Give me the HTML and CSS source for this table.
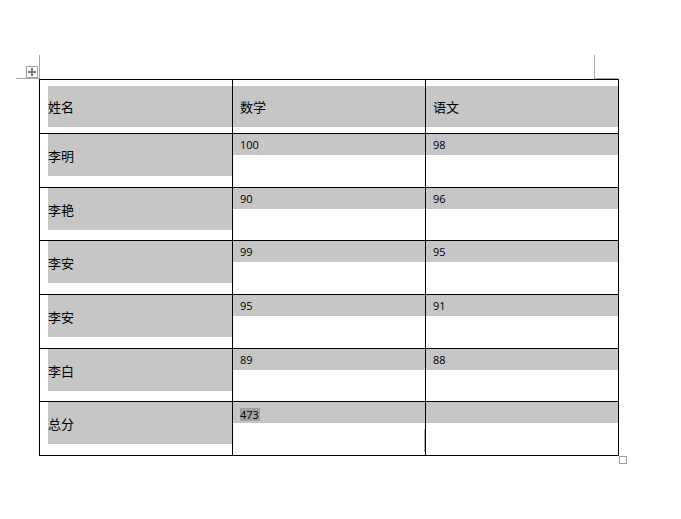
FILE: index.html
```html
<!DOCTYPE html>
<html lang="zh">
<head>
<meta charset="utf-8">
<title>成绩表</title>
<link rel="stylesheet" href="styles.css">
</head>
<body>
<div class="page">
  <span class="mark mark-tl-v"></span>
  <span class="mark mark-tl-h"></span>
  <span class="mark mark-tr-v"></span>
  <span class="mark mark-tr-h"></span>
  <svg class="move-handle" width="12" height="12" viewBox="0 0 12 12">
    <rect x="0.5" y="0.5" width="11" height="11" fill="#fff" stroke="#a0a0a0"/>
    <path d="M6 2.5V9.5M2.5 6H9.5" stroke="#333" stroke-width="1" fill="none"/>
    <path d="M6 2L4.5 3.5H7.5Z M6 10L4.5 8.5H7.5Z M2 6L3.5 4.5V7.5Z M10 6L8.5 4.5V7.5Z" fill="#333"/>
  </svg>
  <div class="grid">
    <div class="cell head"><div class="band band-name">姓名</div></div>
    <div class="cell head"><div class="band band-full">数学</div></div>
    <div class="cell head"><div class="band band-full">语文</div></div>

    <div class="cell"><div class="band band-name tall">李明</div></div>
    <div class="cell"><div class="band band-full short">100</div></div>
    <div class="cell"><div class="band band-full short">98</div></div>

    <div class="cell"><div class="band band-name tall">李艳</div></div>
    <div class="cell"><div class="band band-full short">90</div></div>
    <div class="cell"><div class="band band-full short">96</div></div>

    <div class="cell"><div class="band band-name tall">李安</div></div>
    <div class="cell"><div class="band band-full short">99</div></div>
    <div class="cell"><div class="band band-full short">95</div></div>

    <div class="cell"><div class="band band-name tall">李安</div></div>
    <div class="cell"><div class="band band-full short">95</div></div>
    <div class="cell"><div class="band band-full short">91</div></div>

    <div class="cell"><div class="band band-name tall">李白</div></div>
    <div class="cell"><div class="band band-full short">89</div></div>
    <div class="cell"><div class="band band-full short">88</div></div>

    <div class="cell"><div class="band band-name tall">总分</div></div>
    <div class="cell cursor-cell"><div class="band band-full short"><span class="sel">473</span></div></div>
    <div class="cell"><div class="band band-full short"></div></div>
  </div>
  <span class="resize-handle"></span>
</div>
</body>
</html>
```
FILE: styles.css
```css
html, body {
  margin: 0;
  padding: 0;
  background: #ffffff;
}

body {
  font-family: "Open Sans", "Noto Sans CJK SC", sans-serif;
  color: #000;
}

.page {
  position: relative;
  width: 681px;
  height: 519px;
  padding: 79px 0 0 39px;
  box-sizing: border-box;
}

.mark {
  position: absolute;
  background: #a6a6a6;
}
.mark-tl-v { left: 39px; top: 55px; width: 1px; height: 24px; }
.mark-tl-h { left: 16px; top: 78px; width: 24px; height: 1px; }
.mark-tr-v { left: 594px; top: 55px; width: 1px; height: 24px; }
.mark-tr-h { left: 594px; top: 78px; width: 24px; height: 1px; }

.move-handle {
  position: absolute;
  left: 26px;
  top: 66px;
}

.resize-handle {
  position: absolute;
  left: 619px;
  top: 456px;
  width: 6px;
  height: 6px;
  border: 1px solid #a0a0a0;
  background: #fff;
}

.grid {
  display: grid;
  grid-template-columns: 193px 193px 193px;
  grid-template-rows: 54px 54px 53px 54px 54px 53px 54px;
  width: max-content;
  border-top: 1px solid #000;
  border-left: 1px solid #000;
}

.cell {
  box-sizing: border-box;
  border-right: 1px solid #000;
  border-bottom: 1px solid #000;
  position: relative;
}

.head {
  padding-top: 6px;
}

.band {
  background: #c6c6c6;
  display: flex;
  align-items: center;
  box-sizing: border-box;
}

.head .band {
  height: 41px;
  font-size: 13px;
  font-family: "Noto Sans CJK SC", sans-serif;
}

.band-name {
  margin-left: 8px;
}

.band-full {
  padding-left: 7px;
}

.tall {
  height: 42px;
  font-size: 13px;
  font-family: "Noto Sans CJK SC", sans-serif;
}

.short {
  height: 21px;
  font-size: 11px;
  line-height: 13px;
}

.sel {
  display: inline-block;
  background: #a0a0a0;
  height: 13px;
  line-height: 13px;
  padding: 0 1px 0 0;
  margin-top: 6px;
  align-self: flex-start;
}

.cursor-cell::after {
  content: "";
  position: absolute;
  right: 0;
  top: 27px;
  width: 1px;
  height: 23px;
  background: #b0b0b0;
}
```
